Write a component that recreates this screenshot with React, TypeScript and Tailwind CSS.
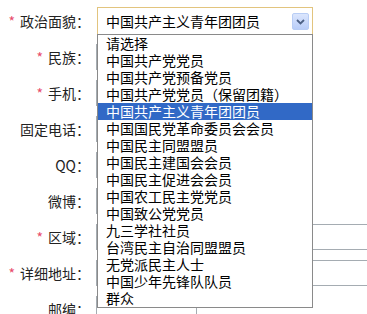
const options = [
  '请选择',
  '中国共产党党员',
  '中国共产党预备党员',
  '中国共产党党员（保留团籍）',
  '中国共产主义青年团团员',
  '中国国民党革命委员会会员',
  '中国民主同盟盟员',
  '中国民主建国会会员',
  '中国民主促进会会员',
  '中国农工民主党党员',
  '中国致公党党员',
  '九三学社社员',
  '台湾民主自治同盟盟员',
  '无党派民主人士',
  '中国少年先锋队队员',
  '群众',
]

const rows = [
  { label: '民族：', required: true, width: 'w-[200px]' },
  { label: '手机：', required: true, width: 'w-[200px]' },
  { label: '固定电话：', required: false, width: 'w-[200px]' },
  { label: 'QQ：', required: false, width: 'w-[200px]' },
  { label: '微博：', required: false, width: 'w-[200px]' },
  { label: '区域：', required: true, width: 'w-[300px]' },
  { label: '详细地址：', required: true, width: 'w-[300px]' },
  { label: '邮编：', required: false, width: 'w-[101px]' },
]

function Label({ text, required }: { text: string; required: boolean }) {
  return (
    <div className="flex w-[96px] shrink-0 justify-end pr-[6px] text-[14px] text-[#222]">
      {required && <span className="mr-[5px] text-[#e84c6c]">*</span>}
      <span>{text}</span>
    </div>
  )
}

export default function App() {
  return (
    <div
      className="relative h-[314px] w-[367px] overflow-hidden bg-white pt-[3px]"
      style={{ fontFamily: '"Noto Sans CJK SC", "Noto Sans", sans-serif' }}
    >
      <div className="relative flex h-[36px] items-center">
        <Label text="政治面貌：" required />
        <div className="relative ml-[1px] flex h-[28px] w-[216px] items-center border border-[#e2c47e] bg-white pl-[8px] text-[14px] text-black">
          <span>中国共产主义青年团团员</span>
          <span className="absolute right-[3px] top-[5px] flex h-[17px] w-[17px] items-center justify-center rounded-[2px] border border-[#b8cdf5] bg-gradient-to-b from-[#dbe6fd] to-[#b9cdf8]">
            <svg width="9" height="6" viewBox="0 0 9 6">
              <path d="M1 1 L4.5 4.5 L8 1" fill="none" stroke="#4d6185" strokeWidth="1.8" />
            </svg>
          </span>
        </div>

        <ul className="absolute left-[97px] top-[31px] z-10 w-[216px] border border-[#8a8a8a] bg-white text-[14px] leading-[17px] text-black">
          {options.map((o, i) => (
            <li
              key={o}
              className={
                i === 4
                  ? 'h-[17px] bg-[#3169c6] pl-[8px] text-white'
                  : 'h-[17px] pl-[8px]'
              }
            >
              {o}
            </li>
          ))}
        </ul>
      </div>

      {rows.map((r) => (
        <div key={r.label} className="flex h-[36px] items-center">
          <Label text={r.label} required={r.required} />
          <div className={`h-[26px] shrink-0 border border-[#a5acb2] bg-white ${r.width}`} />
        </div>
      ))}
    </div>
  )
}
